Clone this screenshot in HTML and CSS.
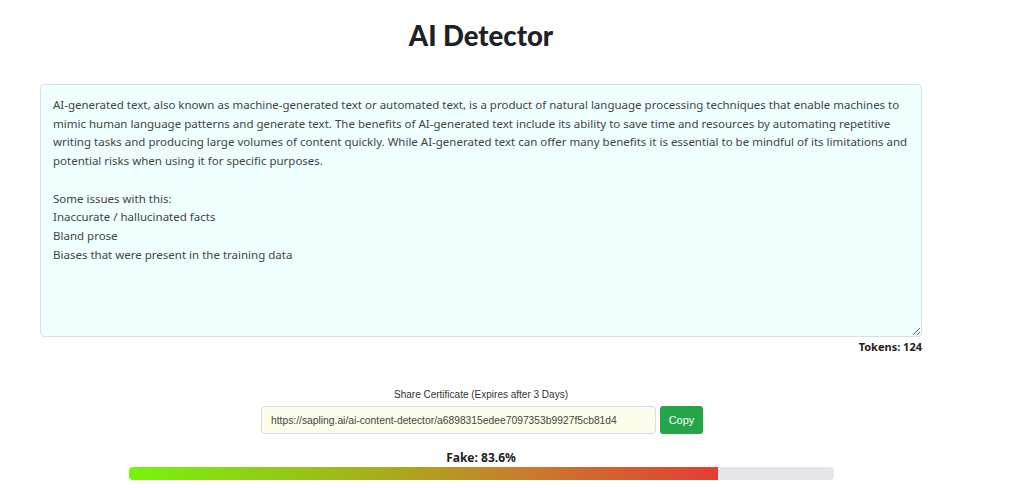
FILE: index.html
```html
<!DOCTYPE html>
<html lang="en">
<head>
<meta charset="UTF-8">
<meta name="viewport" content="width=device-width, initial-scale=1.0">
<title>AI Detector</title>
<link rel="stylesheet" href="styles.css">
</head>
<body>

<div class="page">
    <h1 class="title">AI Detector</h1>

    <div class="editor">
        <textarea class="input-text" spellcheck="false">AI-generated text, also known as machine-generated text or automated text, is a product of natural language processing techniques that enable machines to mimic human language patterns and generate text. The benefits of AI-generated text include its ability to save time and resources by automating repetitive writing tasks and producing large volumes of content quickly. While AI-generated text can offer many benefits it is essential to be mindful of its limitations and potential risks when using it for specific purposes.

Some issues with this:
Inaccurate / hallucinated facts
Bland prose
Biases that were present in the training data</textarea>
        <div class="tokens">Tokens: 124</div>
    </div>

    <div class="share">
        <p class="share-label">Share Certificate (Expires after 3 Days)</p>
        <div class="share-row">
            <input class="share-link" type="text" readonly value="https://sapling.ai/ai-content-detector/a6898315edee7097353b9927f5cb81d4">
            <button class="copy-btn">Copy</button>
        </div>
    </div>

    <div class="result">
        <div class="result-label">Fake: 83.6%</div>
        <div class="bar">
            <div class="bar-fill" style="width: 83.6%"></div>
        </div>
    </div>
</div>

</body>
</html>
```

FILE: styles.css
```css
* {
    box-sizing: border-box;
    margin: 0;
    padding: 0;
}
body {
    font-family: "Noto Sans", sans-serif;
    background-color: #ffffff;
    color: #333333;
}
.page {
    width: 882px;
    margin-left: 40px;
    display: flex;
    flex-direction: column;
    align-items: center;
}
.title {
    font-family: "Lato", sans-serif;
    font-size: 27.5px;
    font-weight: 900;
    color: #1e2227;
    margin-top: 19px;
    height: 65px;
}

/* text box */
.editor {
    width: 100%;
    display: flex;
    flex-direction: column;
}
.input-text {
    width: 100%;
    height: 253px;
    resize: vertical;
    background-color: #effefe;
    border: 1px solid #d6e2e6;
    border-radius: 4px;
    padding: 11px 12px;
    font-family: "Noto Sans", sans-serif;
    font-size: 11.5px;
    line-height: 18.7px;
    color: #444444;
    outline: none;
}
.tokens {
    align-self: flex-end;
    font-family: "Noto Sans", sans-serif;
    font-size: 11px;
    font-weight: 700;
    color: #222222;
    margin-top: 2px;
}

/* share */
.share {
    margin-top: 35px;
    display: flex;
    flex-direction: column;
    align-items: center;
}
.share-label {
    font-family: "Liberation Sans", Arial, sans-serif;
    font-size: 10px;
    color: #333333;
    margin-bottom: 6px;
}
.share-row {
    display: flex;
    gap: 4px;
    margin-left: 2px;
}
.share-link {
    width: 395px;
    height: 28px;
    background-color: #fdfdec;
    border: 1px solid #dedede;
    border-radius: 4px;
    padding: 0 9px;
    font-family: "Liberation Sans", Arial, sans-serif;
    font-size: 10.3px;
    color: #444444;
    outline: none;
}
.copy-btn {
    width: 43px;
    height: 28px;
    background-color: #25a547;
    color: #ffffff;
    border: none;
    border-radius: 3px;
    font-family: "Liberation Sans", Arial, sans-serif;
    font-size: 11px;
    cursor: pointer;
}

/* result */
.result {
    margin-top: 15px;
    display: flex;
    flex-direction: column;
    align-items: center;
}
.result-label {
    font-family: "Noto Sans", sans-serif;
    font-size: 12px;
    font-weight: 700;
    color: #222222;
    margin-bottom: 1px;
}
.bar {
    width: 705px;
    height: 13px;
    background-color: #e6e6ea;
    border-radius: 4px;
    overflow: hidden;
}
.bar-fill {
    height: 100%;
    background: linear-gradient(to right, #76f40d, #a3b31a 40%, #c7802a 65%, #e53d35);
}
```
